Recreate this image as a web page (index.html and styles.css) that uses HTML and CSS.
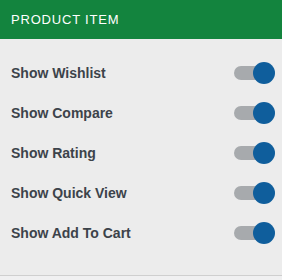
FILE: index.html
```html
<!DOCTYPE html>
<html lang="en">
<head>
    <meta charset="UTF-8">
    <meta name="viewport" content="width=device-width, initial-scale=1.0">
    <title>Product Item</title>
    <link rel="stylesheet" href="styles.css">
</head>
<body>
    <div class="panel">
        <div class="panel-header">
            <h2>Product Item</h2>
        </div>

        <div class="panel-body">
            <div class="toggle-row">
                <span class="toggle-label">Show Wishlist</span>
                <span class="switch is-on"><span class="knob"></span></span>
            </div>
            <div class="toggle-row">
                <span class="toggle-label">Show Compare</span>
                <span class="switch is-on"><span class="knob"></span></span>
            </div>
            <div class="toggle-row">
                <span class="toggle-label">Show Rating</span>
                <span class="switch is-on"><span class="knob"></span></span>
            </div>
            <div class="toggle-row">
                <span class="toggle-label">Show Quick View</span>
                <span class="switch is-on"><span class="knob"></span></span>
            </div>
            <div class="toggle-row">
                <span class="toggle-label">Show Add To Cart</span>
                <span class="switch is-on"><span class="knob"></span></span>
            </div>
        </div>
    </div>
</body>
</html>
```

FILE: styles.css
```css
* {
    margin: 0;
    padding: 0;
    box-sizing: border-box;
}

body {
    font-family: 'Liberation Sans', Arial, sans-serif;
    background: #f0f0f1;
    width: 282px;
    height: 280px;
    overflow: hidden;
}

.panel {
    background: #ececec;
    border-bottom: 1px solid #cfcfcf;
}

.panel-header {
    background: #13843e;
    height: 39px;
    padding: 0 11px;
    display: flex;
    align-items: center;
}

.panel-header h2 {
    color: #fff;
    font-size: 13px;
    font-weight: normal;
    text-transform: uppercase;
    letter-spacing: 0.8px;
    margin-top: -1px;
}

.panel-body {
    padding: 14px 7px 22px 11px;
}

.toggle-row {
    height: 40px;
    display: flex;
    align-items: center;
    justify-content: space-between;
}

.toggle-label {
    font-size: 14px;
    font-weight: bold;
    color: #3c434a;
}

.switch {
    position: relative;
    width: 41px;
    height: 22px;
    display: flex;
    align-items: center;
}

.switch::before {
    content: '';
    width: 34px;
    height: 14px;
    border-radius: 7px;
    background: #a7aaad;
}

.knob {
    position: absolute;
    top: 0;
    left: 0;
    width: 22px;
    height: 22px;
    border-radius: 50%;
    background: #a7aaad;
}

.switch.is-on .knob {
    left: auto;
    right: 0;
    background: #0f5e9c;
}
```
